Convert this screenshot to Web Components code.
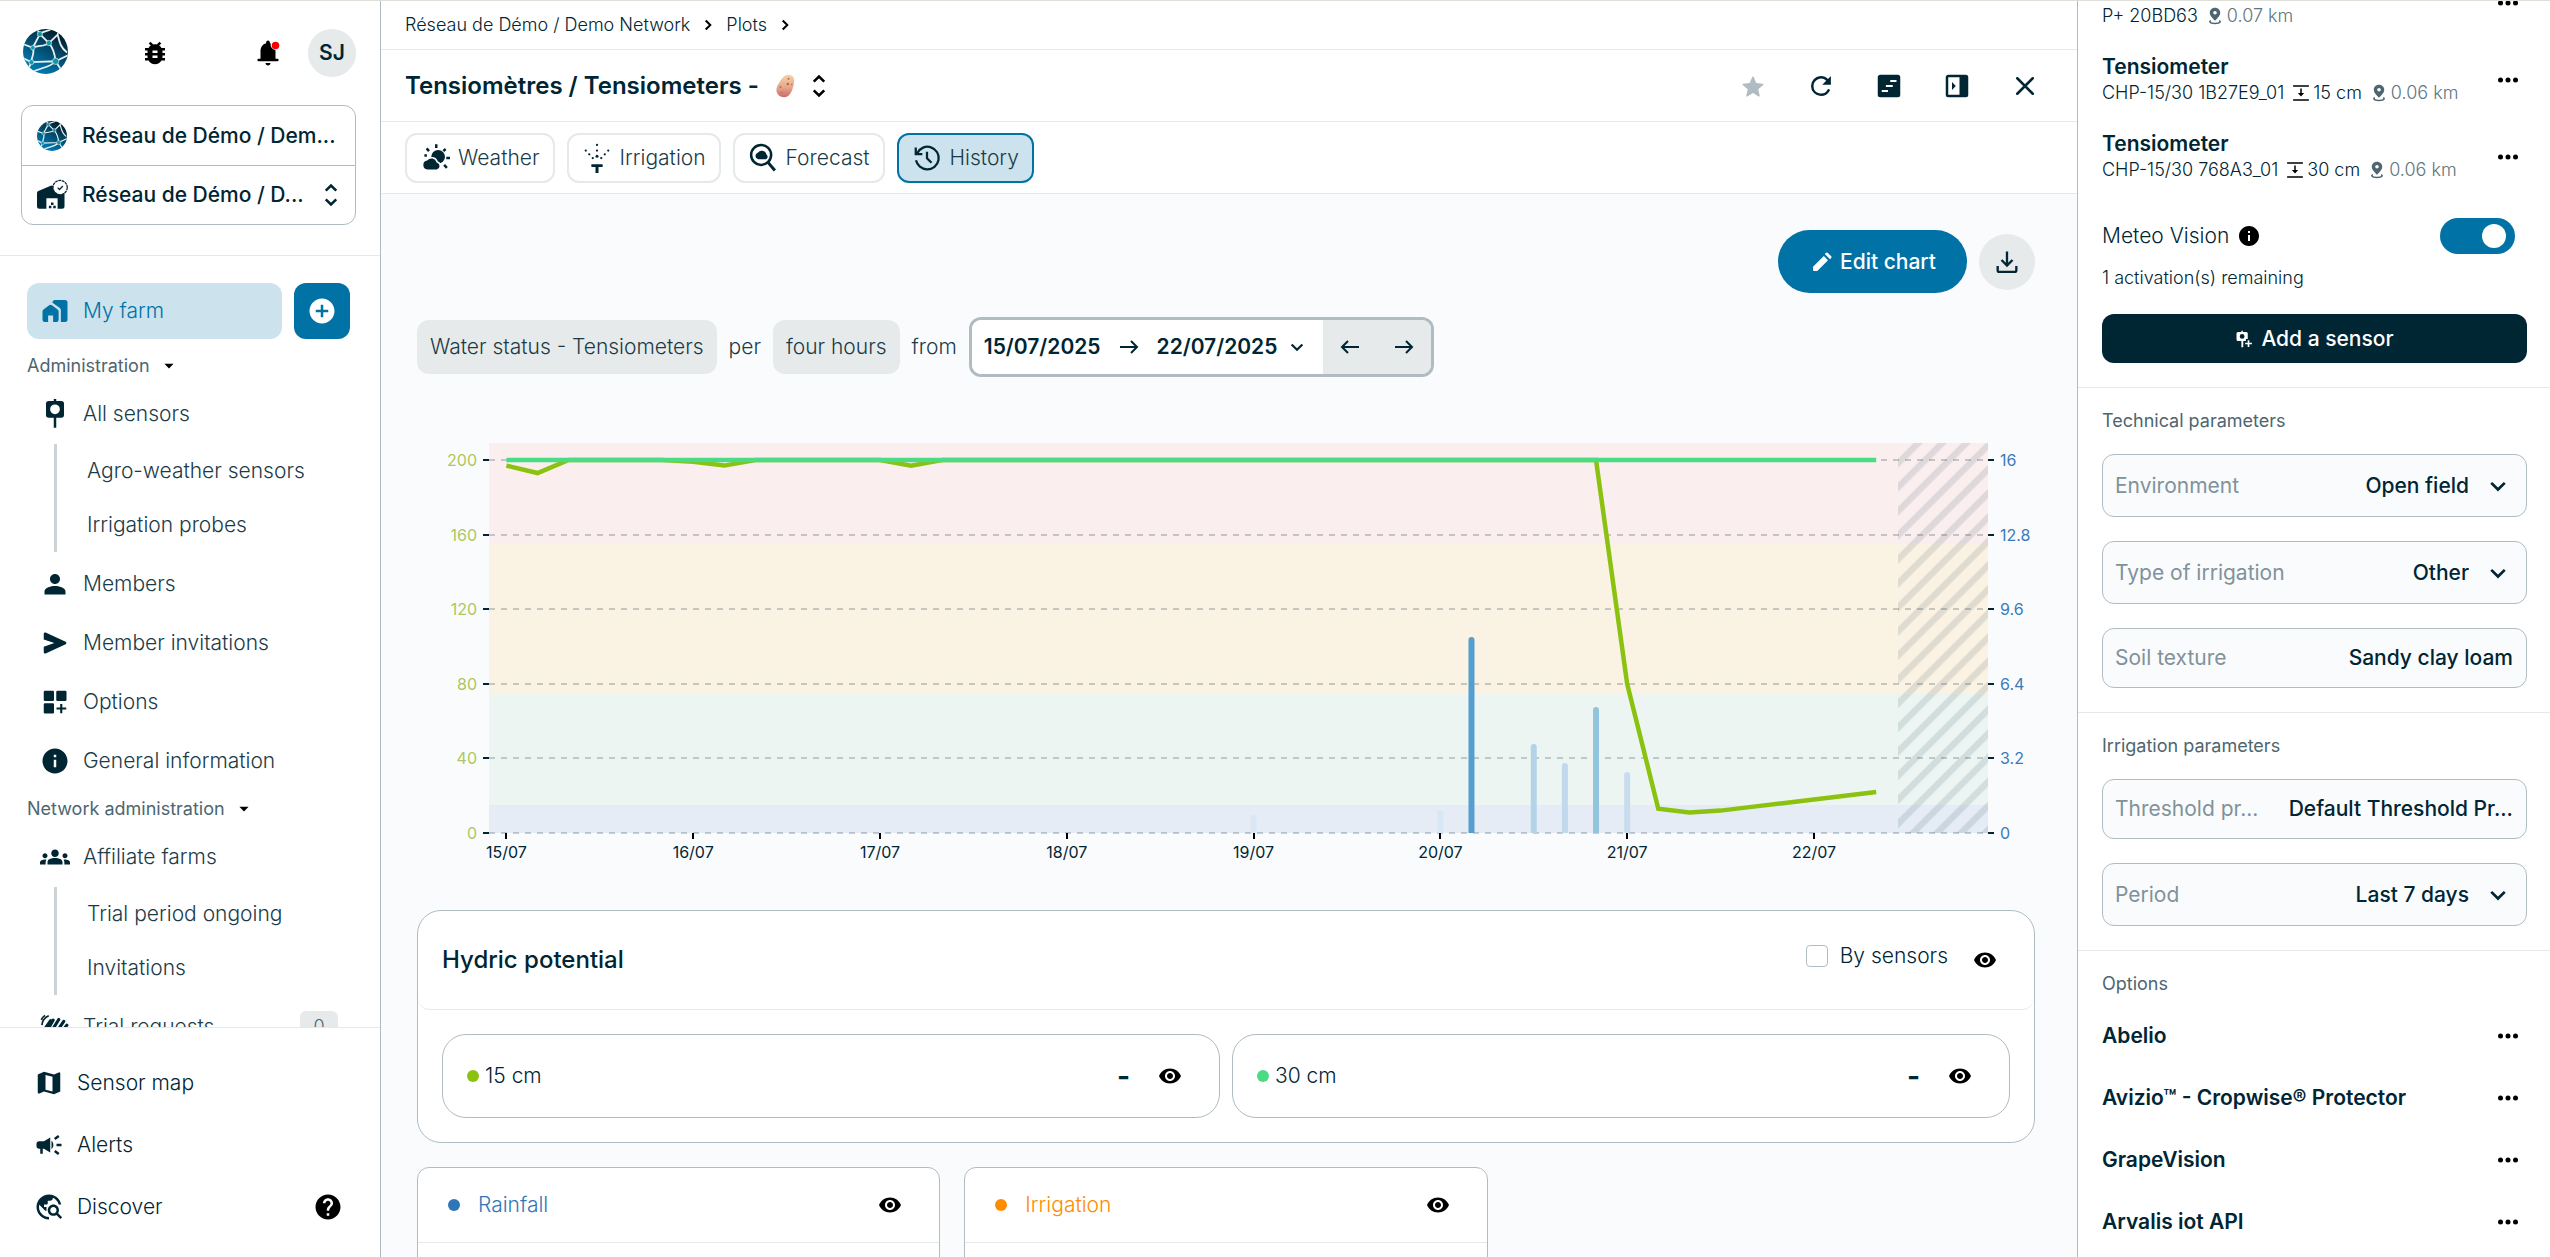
<!DOCTYPE html>
<html lang="en">
<head>
<meta charset="utf-8">
<title>Tensiomètres / Tensiometers - History</title>
<style>
  :root {
    --ink: #002533;
    --text: #1a3b47;
    --muted: #4d6670;
    --faint: #80929a;
    --line: #e6e9e9;
    --edge: #b0bcc2;
    --blue: #0072a6;
    --sky: #cce3ed;
    --grey: #e6eaea;
    --ground: #fafbfd;
  }
  body { margin: 0; font-family: Inter, "Liberation Sans", sans-serif; font-size: 21px; line-height: 28px; font-weight: 300; color: var(--ink); background: #fff; }
</style>
</head>
<body>
<farm-app></farm-app>

<script>
const ICONS = {
  bug: '<path d="M20 8h-2.81c-.45-.78-1.07-1.45-1.82-1.96L17 4.41 15.59 3l-2.17 2.17C12.96 5.06 12.49 5 12 5c-.49 0-.96.06-1.41.17L8.41 3 7 4.41l1.62 1.63C7.88 6.55 7.26 7.22 6.81 8H4v2h2.09c-.05.33-.09.66-.09 1v1H4v2h2v1c0 .34.04.67.09 1H4v2h2.81c1.04 1.79 2.97 3 5.19 3s4.15-1.21 5.19-3H20v-2h-2.09c.05-.33.09-.66.09-1v-1h2v-2h-2v-1c0-.34-.04-.67-.09-1H20V8zm-6 8h-4v-2h4v2zm0-4h-4v-2h4v2z"/>',
  bell: '<path d="M12 22c1.1 0 2-.9 2-2h-4c0 1.1.89 2 2 2zM18 15.500v-5c0-.3 0-.6-.1-1a4.300 4.300 0 0 1-3.700-5.200 6 6 0 0 0-.7-.2V3.500c0-.83-.67-1.500-1.500-1.500s-1.500.67-1.500 1.500v.68C7.63 4.900 6 7.420 6 10.500V16.500H4.500a1 1 0 0 0 0 2h15a1 1 0 0 0 0-2H18z"/><circle cx="18" cy="6" r="3" fill="red"/>',
  updown: '<path d="M7.500 8.300 12 3.900l4.500 4.400M7.500 15.700 12 20.100l4.500-4.400" fill="none" stroke="currentColor" stroke-width="2.200"/>',
  work: '<path d="M2 12.300c0-.7.300-1.200.800-1.600l4.500-3.300a1.900 1.900 0 0 1 2.300 0l4.500 3.300c.5.400.8.900.8 1.600V19a1.800 1.800 0 0 1-1.800 1.800H10.500v-5.300h-4v5.300H3.800A1.800 1.800 0 0 1 2 19z"/><path d="M10 5.200A2 2 0 0 1 12 3.200h8a2 2 0 0 1 2 2v13.600a2 2 0 0 1-2 2h-3.300V11.600c0-.9-.4-1.700-1.100-2.200L10 5.400z"/>',
  addcircle: '<path d="M12 2C6.480 2 2 6.480 2 12s4.480 10 10 10 10-4.480 10-10S17.520 2 12 2zm5 11h-4v4h-2v-4H7v-2h4V7h2v4h4v2z"/>',
  caret: '<path d="M7 9.500h10L12 14.800z"/>',
  probe: '<path fill-rule="evenodd" d="M11 0h2v1.500h4a2.200 2.200 0 0 1 2.200 2.200v9A2.200 2.200 0 0 1 17 14.900h-4v8h-2v-8H7a2.200 2.200 0 0 1-2.200-2.200v-9A2.200 2.200 0 0 1 7 1.500h4zM12 4.300a3.900 3.900 0 1 0 0 7.800 3.900 3.900 0 0 0 0-7.800z"/>',
  person: '<path d="M12 12c2.210 0 4-1.790 4-4s-1.790-4-4-4-4 1.790-4 4 1.790 4 4 4zm0 1.600c-3 0-8.400 1.200-8.400 4.400v2.400h16.800V18c0-3.200-5.400-4.400-8.400-4.400z"/>',
  send: '<path d="M3 4.600c0-.8.8-1.300 1.500-1l16 7.300c.8.400.8 1.700 0 2l-16 7.400c-.7.300-1.500-.2-1.500-1V15l8.500-3L3 9.200z"/>',
  widgets: '<rect x="3" y="3" width="8.200" height="8.200" rx="1"/><rect x="13" y="3" width="8.200" height="8.200" rx="1"/><rect x="3" y="13" width="8.200" height="8.200" rx="1"/><path d="M17 13.500v7.500M13.200 17.200h7.800" fill="none" stroke="currentColor" stroke-width="1.700"/>',
  info: '<path d="M12 2C6.480 2 2 6.480 2 12s4.480 10 10 10 10-4.480 10-10S17.520 2 12 2zm1 15h-2v-6h2v6zm0-8h-2V7h2v2z"/>',
  groups: '<path d="M12 12.750c1.630 0 3.070.39 4.240.9 1.080.48 1.760 1.560 1.760 2.730V18H6v-1.610c0-1.180.68-2.260 1.760-2.730 1.170-.52 2.610-.91 4.240-.91zM4 13c1.100 0 2-.9 2-2s-.9-2-2-2-2 .9-2 2 .9 2 2 2zm1.130 1.100c-.37-.06-.74-.1-1.130-.1-.99 0-1.930.21-2.780.58C.48 14.900 0 15.620 0 16.430V18h4.500v-1.610c0-.83.23-1.610.63-2.290zM20 13c1.100 0 2-.9 2-2s-.9-2-2-2-2 .9-2 2 .9 2 2 2zm4 3.430c0-.81-.48-1.530-1.220-1.850-.85-.37-1.790-.58-2.780-.58-.39 0-.76.04-1.130.1.4.68.63 1.460.63 2.290V18H24v-1.570zM12 6c1.660 0 3 1.340 3 3s-1.340 3-3 3-3-1.340-3-3 1.340-3 3-3z"/>',
  hands: '<path d="M7 20 2.500 15.500 8.500 7M7 19l8-13M10.500 20l8.500-12.500M14 20.500l7.500-10M4.500 17 10.500 6.500" fill="none" stroke="currentColor" stroke-width="2.500" stroke-linecap="round"/><path d="M1.500 10.500A9 9 0 0 1 7 3M1 6.300A9 9 0 0 1 4 2.700" fill="none" stroke="currentColor" stroke-width="1.300"/>',
  map: '<path fill-rule="evenodd" d="M3 5.200 8 3l8 2.200 3.800-1.700A1 1 0 0 1 21 4.400V18.800L16 21l-8-2.300-3.700 1.700A1 1 0 0 1 3 19.500zM9.200 5.500v11.800l5.600 1.500V7z"/>',
  alerts: '<path d="M18 11v2h4v-2h-4zm-2 6.610c.96.71 2.210 1.650 3.200 2.390.4-.53.8-1.070 1.200-1.600-.99-.74-2.240-1.680-3.200-2.400-.4.540-.8 1.080-1.200 1.610zM20.400 5.600c-.4-.53-.8-1.070-1.200-1.600-.99.740-2.240 1.680-3.200 2.400.4.530.8 1.070 1.200 1.600.96-.72 2.210-1.650 3.200-2.400zM4 9c-1.100 0-2 .9-2 2v2c0 1.100.9 2 2 2h1v4h2v-4h1l5 3V6L8 9H4zm11.500 3c0-1.330-.58-2.530-1.500-3.350v6.690c.92-.81 1.500-2.010 1.500-3.340z"/>',
  explore: '<path d="M19.300 16.900c.4-.7.7-1.500.7-2.400 0-2.500-2-4.500-4.500-4.500S11 12 11 14.500s2 4.500 4.500 4.500c.9 0 1.700-.3 2.400-.7l3.200 3.200 1.400-1.400-3.200-3.200zm-3.800.1c-1.400 0-2.500-1.100-2.500-2.500s1.100-2.500 2.500-2.500 2.500 1.100 2.500 2.500-1.100 2.500-2.500 2.500zM12 20v2C6.480 22 2 17.520 2 12S6.480 2 12 2c4.840 0 8.870 3.440 9.800 8h-2.070c-.64-2.460-2.400-4.470-4.730-5.410V5c0 1.100-.9 2-2 2h-2v2c0 .55-.45 1-1 1H8v2h2v3H9l-4.790-4.790C4.080 10.790 4 11.380 4 12c0 4.410 3.590 8 8 8z"/>',
  help: '<path d="M12 2C6.480 2 2 6.480 2 12s4.480 10 10 10 10-4.480 10-10S17.520 2 12 2zm1 17h-2v-2h2v2zm2.070-7.750l-.9.920C13.450 12.900 13 13.500 13 15h-2v-.5c0-1.100.45-2.100 1.170-2.830l1.240-1.260c.37-.36.59-.86.59-1.410 0-1.100-.9-2-2-2s-2 .9-2 2H8c0-2.210 1.790-4 4-4s4 1.790 4 4c0 .88-.36 1.680-.93 2.250z"/>',
  right: '<path d="m9.500 7 5 5-5 5" fill="none" stroke="currentColor" stroke-width="2.200"/>',
  down: '<path d="m6.600 9.500 5.400 5.300 5.400-5.300" fill="none" stroke="currentColor" stroke-width="2.200"/>',
  star: '<path d="m12 17.600-4.500 2.700c-.5.300-1-.1-.9-.6l1.200-5.100-4-3.500c-.4-.4-.2-1 .3-1l5.200-.5 2.100-4.900c.2-.5.900-.5 1.100 0l2.100 4.900 5.300.5c.5 0 .7.600.3 1l-4 3.500 1.200 5.100c.1.500-.4.900-.9.600z"/>',
  refresh: '<path d="M12 20a7.900 7.900 0 0 1-8-8 7.900 7.900 0 0 1 8-8c2.200 0 4.200.9 5.600 2.300L19.900 4v7H13l3.200-3.200A6 6 0 0 0 6 12a6 6 0 0 0 11.200 3c.3-.5.800-.8 1.300-.5.600.200.8.800.5 1.300A8 8 0 0 1 12 20z"/>',
  notes: '<path fill-rule="evenodd" d="M5 3h14a2 2 0 0 1 2 2v14a2 2 0 0 1-2 2H5a2 2 0 0 1-2-2V5c0-1.100.9-2 2-2zm8 4.200v1.600h5V7.200zM9.500 11.200v1.600h5.500v-1.600zM6.200 15.200v1.600h5v-1.600z"/>',
  panel: '<path fill-rule="evenodd" d="M5 3h14a2 2 0 0 1 2 2v14a2 2 0 0 1-2 2H5a2 2 0 0 1-2-2V5c0-1.100.9-2 2-2zm0 2v14h9V5zm3 3.800L11 12l-3 3.200z"/>',
  close: '<path d="M5.800 5.800l12.400 12.400M18.200 5.800 5.800 18.200" fill="none" stroke="currentColor" stroke-width="2" stroke-linecap="round"/>',
  weather: '<circle cx="14.500" cy="11" r="5.500"/><path d="M13 1v3M5.300 4.300l1.900 2.200M20.500 4.800 18.700 6.500M21 12h3M19.300 17.500l2.200 2.400M3.500 10h2" fill="none" stroke="currentColor" stroke-width="2"/><path d="M5.800 21.800a4.200 4.200 0 0 1-.3-8.300 4.800 4.800 0 0 1 8.300 1.700 3.400 3.400 0 0 1-.3 6.600z" stroke="#fff" stroke-width="1.200"/>',
  sprinkler: '<circle cx="12" cy="1.500" r=".9"/><circle cx="12" cy="6" r=".9"/><circle cx="12" cy="10.500" r="1.200"/><circle cx="3" cy="6" r=".9"/><circle cx="5.800" cy="9" r=".9"/><circle cx="8.600" cy="12" r=".9"/><circle cx="21" cy="6" r=".9"/><circle cx="18.200" cy="9" r=".9"/><circle cx="15.400" cy="12" r=".9"/><path d="M7.500 17h9v2.200h-3.300V24h-2.400v-4.800H7.500z"/>',
  forecast: '<circle cx="10.500" cy="9.500" r="8" fill="none" stroke="currentColor" stroke-width="2"/><path d="M16 15.500 21.500 22" fill="none" stroke="currentColor" stroke-width="2.400"/><path d="M8.200 13a2.700 2.700 0 0 1-.4-5.200A4 4 0 0 1 14.800 9v.4a2 2 0 0 1-.6 3.600z"/>',
  history: '<path d="M12 21c-4.300 0-7.900-3.100-8.800-7.200M4.300 8A9 9 0 1 1 12 21M3 3.500v5.300h5.300" fill="none" stroke="currentColor" stroke-width="1.800"/><path d="M12 7v5.200l3.600 3.600" fill="none" stroke="currentColor" stroke-width="1.800"/>',
  edit: '<path fill-rule="evenodd" d="M3 17.200V20a1 1 0 0 0 1 1h2.800a1 1 0 0 0 .7-.3L18 10.200 13.800 6 3.300 16.500a1 1 0 0 0-.3.700zM21 6.100 17.900 3a1.500 1.500 0 0 0-2.100 0l-1 1 5.200 5.200 1-1a1.500 1.500 0 0 0 0-2.100z"/>',
  download: '<path d="M12 3v11M7.300 10.300 12 15l4.700-4.700M4 15.500V19a1.500 1.500 0 0 0 1.500 1.500h13A1.500 1.500 0 0 0 20 19v-3.500" fill="none" stroke="currentColor" stroke-width="2"/>',
  arrowr: '<path d="M3 12h17M14 6l6 6-6 6" fill="none" stroke="currentColor" stroke-width="2"/>',
  arrowl: '<path d="M21 12H4M10 6l-6 6 6 6" fill="none" stroke="currentColor" stroke-width="2"/>',
  eye: '<path d="M12 4.500C7 4.500 2.730 7.610 1 12c1.730 4.390 6 7.500 11 7.500s9.270-3.110 11-7.500c-1.730-4.390-6-7.500-11-7.500zM12 17c-2.760 0-5-2.240-5-5s2.240-5 5-5 5 2.240 5 5-2.240 5-5 5zm0-8c-1.660 0-3 1.340-3 3s1.340 3 3 3 3-1.340 3-3-1.340-3-3-3z"/>',
  more: '<circle cx="6" cy="12" r="2"/><circle cx="12" cy="12" r="2"/><circle cx="18" cy="12" r="2"/>',
  pin: '<path fill-rule="evenodd" d="M12 1c4 0 7 2.900 7 6.800 0 3.600-2.700 6.500-7 10.400-4.300-3.900-7-6.800-7-10.400C5 3.900 8 1 12 1zm0 4.200a2.400 2.400 0 1 0 0 4.800 2.400 2.400 0 0 0 0-4.800z"/><path d="M6.500 18.200c-1.300.5-1.800 1.200-1.200 2 1.600 2.200 11.800 2.200 13.400 0 .6-.8.100-1.500-1.200-2" fill="none" stroke="currentColor" stroke-width="2"/>',
  depth: '<path d="M1.500 2.800h21M1.500 21.200h21" fill="none" stroke="currentColor" stroke-width="2"/><path d="M11 6h2v6h3.200L12 16.500 7.800 12H11z"/>',
  addsensor: '<path fill-rule="evenodd" d="M8.500 1h2v1.500H15A2 2 0 0 1 17 4.500V12h-2.500v2.500H11V23H8.500v-8.500H4a2 2 0 0 1-2-2v-8a2 2 0 0 1 2-2h4.500zm1 4.300a3.200 3.200 0 1 0 0 6.400 3.200 3.200 0 0 0 0-6.400z"/><path d="M18 13.500v9M13.500 18h9" fill="none" stroke="currentColor" stroke-width="2.200"/>',
  farm: '<path d="M0 10.500c0-.8.400-1.500 1.100-1.800L11 4.500a2 2 0 0 1 1.600 0L22 9v12a2 2 0 0 1-2 2h-3.500v-8.500h-9V23H2a2 2 0 0 1-2-2z"/><path d="M9.500 20.500h2v2h-2zM13 20.500h2v2h-2zM11.200 18h2v2h-2z"/><circle cx="18.500" cy="6" r="5.700" fill="#fff" stroke="currentColor" stroke-width="1" stroke-dasharray="2.300 .5"/><path d="m16.500 6.100 1.500 1.500 2.700-2.800" fill="none" stroke="currentColor" stroke-width="1"/>',
  potato: '<defs><linearGradient id="p" x1="0" y1="0" x2="0" y2="1"><stop offset="0" stop-color="#f6d3a8"/><stop offset=".55" stop-color="#e5a98a"/><stop offset="1" stop-color="#cb6a6c"/></linearGradient></defs><path d="M15 .8c4.500-.3 7 3.300 6 8.400-.9 4.700-2.200 9-5 12-2.700 2.900-8.500 2.500-11-.8-2.700-3.600-1.500-8.200 1-11.500C8.500 5.500 10.500 1.100 15 .8z" fill="url(#p)"/><g fill="#b4694e"><circle cx="15.500" cy="4.800" r="1"/><circle cx="14.800" cy="10" r="1.300"/><circle cx="18.800" cy="10.500" r=".8"/><circle cx="7.500" cy="13" r=".9"/><circle cx="9" cy="18.500" r=".8"/></g>',
  globe: '<defs><linearGradient id="g" x1=".75" y1=".1" x2=".3" y2=".85"><stop offset="0" stop-color="#01202c"/><stop offset=".35" stop-color="#04405c"/><stop offset="1" stop-color="#0076ab"/></linearGradient><clipPath id="c"><circle cx="12" cy="12" r="12"/></clipPath></defs><circle cx="12" cy="12" r="12" fill="url(#g)"/><g clip-path="url(#c)"><path d="M9 2.700 7.500 0M9 2.700C11 .8 13 1.500 15 0M9 2.700l4.800 4.800M9 2.700 5.200 10M13.800 7.500 18.500 3l.8-3M13.800 7.500C11.500 9.500 8 8.500 5.200 10M5.200 10 0 8M5.200 10c1.300 3-.9 5-.7 7.700M4.500 17.700 0 15.500M4.500 17.700 3 21M4.500 17.700l12.900-.5M13.800 7.500c2.700 3 3.200 6 3.600 9.700M17.400 17.200 24 14M17.400 17.200 20.500 22M17.400 17.200C14 21 9 20.500 5 23M18.500 3c1 4 1.500 7 5 9.500" fill="none" stroke="#e6f1f6" stroke-width=".95"/></g><g fill="#0f98a5" stroke="#d4ecef" stroke-width=".35"><circle cx="9" cy="2.700" r="1.400"/><circle cx="13.800" cy="7.500" r="1.400"/><circle cx="5.200" cy="10" r="1.200"/><circle cx="4.500" cy="17.700" r="1.300"/><circle cx="17.400" cy="17.200" r="1.700"/></g>'
};

const RESET = `
  *, *::before { box-sizing: border-box; }
  a { color: inherit; text-decoration: none; }
  button { font: inherit; color: inherit; border: 0; padding: 0; margin: 0; background: none; display: flex; align-items: center; justify-content: center; }
  h1, h2, h3, p { margin: 0; font: inherit; }
  ui-icon { flex: none; }
`;

/* Registers a custom element whose shadow root is filled from a style and a markup function. */
function component(name, css, markup, after) {
  customElements.define(name, class extends HTMLElement {
    constructor() { super(); this.attachShadow({ mode: 'open' }); }
    connectedCallback() {
      const t = document.createElement('template');
      t.innerHTML = `<style>${RESET}${css}</style>${markup(this)}`;
      this.shadowRoot.replaceChildren(t.content.cloneNode(true));
      if (after) after(this);
    }
  });
}
const at = (el, name) => el.getAttribute(name) || '';

component('ui-icon',
  `:host { display: block; width: var(--size, 30px); height: var(--size, 30px); } svg { display: block; width: 100%; height: 100%; overflow: visible; }`,
  el => `<svg viewBox="0 0 24 24" fill="currentColor" aria-hidden="true">${ICONS[at(el, 'name')]}</svg>`);

component('more-button',
  `:host { display: block; color: #000; flex: none; }`,
  () => `<button aria-label="More"><ui-icon name="more"></ui-icon></button>`);

/* ---------- Sidebar ---------- */

component('nav-item', `
  :host { display: block; }
  a { display: flex; align-items: center; height: 59px; padding-left: 40px; gap: 13px; color: var(--text); }
  :host([sub]) a { height: 54px; padding-left: 30px; }
  :host([foot]) a { height: 62px; padding: 0 37px 0 34px; color: var(--ink); }
  a ui-icon { color: var(--ink); }
  .label { flex: 1; }
`, el => `<a href="#">${at(el, 'icon') ? `<ui-icon name="${at(el, 'icon')}"></ui-icon>` : ''}<span class="label"><slot></slot></span><slot name="end"></slot></a>`);

component('nav-group', `
  :host { display: block; }
  button { height: 37px; padding-left: 27px; gap: 8px; font-size: 18px; font-weight: 400; color: var(--muted); }
  ui-icon { --size: 22px; color: #000; }
`, el => `<button aria-expanded="true">${at(el, 'label')}<ui-icon name="caret"></ui-icon></button><slot></slot>`);

component('nav-sub', `
  :host { display: block; margin: 1px 0 2px 54px; border-left: 3px solid #ccd3d6; }
`, () => `<slot></slot>`);

component('side-bar', `
  :host { display: flex; flex-direction: column; width: 381px; border-right: 1px solid var(--edge); background: #fff; }
  header { padding: 28px 24px 30px 21px; border-bottom: 1px solid var(--line); }
  .top { display: flex; align-items: center; margin-bottom: 28px; color: #000; }
  .logo { --size: 45px; margin: 0 72px 3px 2px; }
  .bell { margin-left: auto; }
  .avatar { width: 48px; height: 48px; margin-left: 25px; border-radius: 50%; background: var(--grey); color: var(--ink); font-weight: 600; }
  .switch { border: 1px solid var(--edge); border-radius: 12px; }
  .switch button { width: 100%; height: 59px; padding: 0 16px 0 15px; gap: 15px; font-weight: 500; text-align: left; }
  .switch button + button { border-top: 1px solid var(--edge); }
  .switch span { flex: 1; min-width: 0; white-space: nowrap; }
  .switch ui-icon:last-child { --size: 28px; margin-left: -15px; margin-right: -6px; }
  nav { flex: 1; min-height: 0; overflow: hidden; padding-top: 27px; }
  .farm { display: flex; gap: 12px; padding: 0 30px 8px 27px; }
  .farm a { flex: 1; height: 56px; display: flex; align-items: center; gap: 13px; padding-left: 13px; border-radius: 12px; background: var(--sky); color: var(--blue); }
  .farm button { width: 56px; height: 56px; border-radius: 12px; background: var(--blue); color: #fff; }
  .count { width: 38px; height: 32px; margin-right: 42px; border-radius: 6px; background: var(--grey); color: var(--muted); font-size: 18px; line-height: 32px; text-align: center; }
  footer { border-top: 1px solid var(--line); padding: 24px 0 19px; }
  .help { color: #000; }
`, () => `
  <header>
    <div class="top">
      <ui-icon class="logo" name="globe"></ui-icon>
      <button aria-label="Report a bug"><ui-icon name="bug"></ui-icon></button>
      <button class="bell" aria-label="Notifications"><ui-icon name="bell"></ui-icon></button>
      <button class="avatar">SJ</button>
    </div>
    <div class="switch">
      <button><ui-icon name="globe"></ui-icon><span>Réseau de Démo / Dem...</span></button>
      <button><ui-icon name="farm"></ui-icon><span>Réseau de Démo / D...</span><ui-icon name="updown"></ui-icon></button>
    </div>
  </header>
  <nav>
    <div class="farm"><a href="#"><ui-icon name="work"></ui-icon>My farm</a><button aria-label="Add"><ui-icon name="addcircle"></ui-icon></button></div>
    <nav-group label="Administration">
      <nav-item icon="probe">All sensors</nav-item>
      <nav-sub><nav-item sub>Agro-weather sensors</nav-item><nav-item sub>Irrigation probes</nav-item></nav-sub>
      <nav-item icon="person">Members</nav-item>
      <nav-item icon="send">Member invitations</nav-item>
      <nav-item icon="widgets">Options</nav-item>
      <nav-item icon="info">General information</nav-item>
    </nav-group>
    <nav-group label="Network administration">
      <nav-item icon="groups">Affiliate farms</nav-item>
      <nav-sub><nav-item sub>Trial period ongoing</nav-item><nav-item sub>Invitations</nav-item></nav-sub>
      <nav-item icon="hands">Trial requests<span slot="end" class="count">0</span></nav-item>
    </nav-group>
  </nav>
  <footer>
    <nav-item foot icon="map">Sensor map</nav-item>
    <nav-item foot icon="alerts">Alerts</nav-item>
    <nav-item foot icon="explore">Discover<ui-icon slot="end" class="help" name="help"></ui-icon></nav-item>
  </footer>
`);

/* ---------- Plot page ---------- */

component('tab-link', `
  :host { display: block; }
  button { height: 50px; padding: 0 13px; gap: 8px; border: 2px solid var(--line); border-radius: 12px; background: #fff; color: var(--text); }
  ui-icon { color: var(--ink); }
  :host([active]) button { border-color: var(--blue); background: var(--sky); }
`, el => `<button><ui-icon name="${at(el, 'icon')}"></ui-icon><slot></slot></button>`);

component('plot-header', `
  :host { display: block; background: #fff; }
  .crumbs, .title, .tabs { display: flex; align-items: center; border-bottom: 1px solid var(--line); padding: 0 37px 0 24px; }
  .crumbs { height: 49px; gap: 7px; font-size: 18px; }
  .crumbs ui-icon { --size: 22px; color: #000; }
  .title { height: 72px; }
  h1 { font-size: 24px; font-weight: 600; }
  .potato { --size: 24px; margin: 0 8px 0 14px; }
  .pick { color: #000; --size: 28px; margin-right: auto; }
  .tools { display: flex; gap: 38px; --size: 30px; }
  .tools button:first-child { color: var(--edge); }
  .tabs { height: 72px; gap: 12px; }
`, () => `
  <div class="crumbs"><a href="#">Réseau de Démo / Demo Network</a><ui-icon name="right"></ui-icon><a href="#">Plots</a><ui-icon name="right"></ui-icon></div>
  <div class="title">
    <h1>Tensiomètres / Tensiometers -</h1><ui-icon class="potato" name="potato"></ui-icon>
    <button class="pick" aria-label="Switch plot"><ui-icon name="updown"></ui-icon></button>
    <div class="tools">
      <button aria-label="Favourite"><ui-icon name="star"></ui-icon></button>
      <button aria-label="Refresh"><ui-icon name="refresh"></ui-icon></button>
      <button aria-label="Notes"><ui-icon name="notes"></ui-icon></button>
      <button aria-label="Side panel"><ui-icon name="panel"></ui-icon></button>
      <button aria-label="Close"><ui-icon name="close"></ui-icon></button>
    </div>
  </div>
  <div class="tabs">
    <tab-link icon="weather">Weather</tab-link><tab-link icon="sprinkler">Irrigation</tab-link>
    <tab-link icon="forecast">Forecast</tab-link><tab-link icon="history" active>History</tab-link>
  </div>
`);

component('chart-toolbar', `
  :host { display: block; }
  .actions { display: flex; justify-content: flex-end; align-items: center; gap: 12px; margin-bottom: 24px; }
  .edit { height: 63px; padding: 0 31px 0 32px; gap: 6px; border-radius: 32px; background: var(--blue); color: #fff; font-weight: 500; --size: 24px; }
  .save { width: 56px; height: 56px; border-radius: 50%; background: var(--grey); --size: 28px; }
  .filters { display: flex; align-items: center; gap: 12px; color: var(--text); }
  .chip { height: 54px; padding: 0 13px; border-radius: 12px; background: var(--grey); }
  .range { display: flex; height: 60px; border: 3px solid var(--edge); border-radius: 12px; overflow: hidden; color: var(--ink); font-weight: 600; --size: 24px; }
  .dates { padding: 0 14px 0 12px; background: #fff; gap: 16px; }
  .dates ui-icon:last-child { margin-left: -8px; }
  .step { width: 54px; background: var(--grey); }
`, () => `
  <div class="actions">
    <button class="edit"><ui-icon name="edit"></ui-icon>Edit chart</button>
    <button class="save" aria-label="Download"><ui-icon name="download"></ui-icon></button>
  </div>
  <div class="filters">
    <button class="chip">Water status - Tensiometers</button><span>per</span><button class="chip">four hours</button><span>from</span>
    <div class="range">
      <button class="dates"><span>15/07/2025</span><ui-icon name="arrowr"></ui-icon><span>22/07/2025</span><ui-icon name="down"></ui-icon></button>
      <button class="step" aria-label="Previous period"><ui-icon name="arrowl"></ui-icon></button>
      <button class="step" aria-label="Next period"><ui-icon name="arrowr"></ui-icon></button>
    </div>
  </div>
`);

/* Tension lines (cb, left axis) over rainfall bars (mm, right axis), one sample per four hours. */
component('tension-chart', `
  :host { display: block; height: 485px; }
  svg { display: block; width: 100%; height: 100%; font-size: 16px; font-weight: 400; }
`, () => `<svg role="img" aria-label="Tensiometers and rainfall, 15/07 to 22/07"></svg>`, el => {
  const svg = el.shadowRoot.querySelector('svg');
  const draw = () => {
    const W = el.clientWidth, L = 72, R = W - 47, top = 42, zero = 432, unit = 1.865;
    const step = (R - L) / 48.15, x0 = L + 17.4;
    const x = i => x0 + i * step, y = v => zero - v * unit;
    const band = (lo, hi, c) => `<rect x="${L}" y="${hi}" width="${R - L}" height="${lo - hi}" fill="${c}"/>`;
    let s = `<defs><pattern id="h" width="17" height="17" patternUnits="userSpaceOnUse" patternTransform="rotate(45)"><rect width="6.500" height="17" fill="#002533" opacity=".11"/></pattern></defs>`;
    s += band(zero, y(15), '#e5ecf5') + band(y(15), y(75), '#ecf5f1') + band(y(75), y(155), '#faf2e3') + band(y(155), top, '#faeeef');
    for (let k = 0; k <= 5; k++) {
      const g = Math.round(y(k * 40));
      s += `<line x1="${L}" x2="${R}" y1="${g}" y2="${g}" stroke="#002533" stroke-opacity=".28" stroke-width="1.500" stroke-dasharray="6"/>`
        + `<path d="M${L - 6} ${g}h6M${R} ${g}h6" stroke="#002533" stroke-width="2"/>`
        + `<text x="${L - 12}" y="${g + 6}" text-anchor="end" fill="#acc75f">${k * 40}</text>`
        + `<text x="${R + 12}" y="${g + 6}" fill="#3a7ab8">${+(k * 3.2).toFixed(1)}</text>`;
    }
    [[24, 815, '#dbe6f4'], [30, 810, '#d8e7f6'], [31, 637, '#549fcf'], [33, 744, '#b4d3e8'], [34, 763, '#c0d9ec'], [35, 707, '#93c4de'], [36, 772, '#c9dced']]
      .forEach(([i, t, c]) => { const yt = t - 401; s += `<path d="M${x(i) - 3} ${zero}V${yt + 3}a3 3 0 0 1 6 0V${zero}z" fill="${c}"/>`; });
    s += `<rect x="${R - 90}" y="${top}" width="90" height="${zero - top}" fill="url(#h)"/>`;
    const v = Array(45).fill(200);
    Object.assign(v, { 0: 197, 1: 193, 6: 199, 7: 197, 13: 197, 36: 80, 37: 13, 38: 11, 39: 12, 40: 14, 41: 16, 42: 18, 43: 20, 44: 22 });
    s += `<polyline points="${v.map((n, i) => x(i) + ',' + y(n)).join(' ')}" fill="none" stroke="#8bc20f" stroke-width="4.500"/>`
      + `<line x1="${x(0)}" x2="${x(44)}" y1="${y(200)}" y2="${y(200)}" stroke="#4bdb84" stroke-width="4.500"/>`;
    for (let d = 0; d < 8; d++)
      s += `<path d="M${Math.round(x(d * 6))} ${zero}v6" stroke="#000" stroke-width="2"/><text x="${x(d * 6)}" y="${zero + 25}" text-anchor="middle" fill="#002533">${15 + d}/07</text>`;
    svg.innerHTML = s;
  };
  draw();
  new ResizeObserver(draw).observe(el);
});

component('depth-card', `
  :host { display: flex; align-items: center; flex: 1; height: 84px; padding: 0 37px 0 24px; border: 1px solid var(--edge); border-radius: 24px; background: #fff; }
  .dot { width: 12px; height: 12px; margin-right: 6px; border-radius: 50%; background: var(--c); }
  .name { flex: 1; }
  .value { font-size: 28px; font-weight: 700; margin-right: 28px; }
  button { color: #000; --size: 24px; }
`, () => `<span class="dot"></span><span class="name"><slot></slot></span><span class="value">-</span><button aria-label="Show or hide"><ui-icon name="eye"></ui-icon></button>`);

component('hydric-card', `
  :host { display: block; border: 1px solid var(--edge); border-radius: 24px; background: #fff; }
  header { display: flex; align-items: center; height: 99px; padding: 0 37px 0 24px; border-bottom: 1px solid var(--line); border-radius: 0 0 12px 12px; }
  h2 { flex: 1; font-size: 24px; font-weight: 500; }
  label { display: flex; align-items: center; gap: 12px; margin: 0 25px 8px 0; }
  input { appearance: none; width: 22px; height: 22px; margin: 0; border: 1px solid var(--edge); border-radius: 4px; background: #fff; }
  button { color: #000; --size: 24px; }
  .depths { display: flex; gap: 12px; padding: 24px; }
`, () => `
  <header><h2>Hydric potential</h2><label><input type="checkbox">By sensors</label><button aria-label="Show or hide all"><ui-icon name="eye"></ui-icon></button></header>
  <div class="depths"><depth-card style="--c: #8bc20f">15 cm</depth-card><depth-card style="--c: #4bdb84">30 cm</depth-card></div>
`);

component('measure-card', `
  :host { display: block; height: 200px; border: 1px solid var(--edge); border-radius: 12px; background: #fff; }
  header { display: flex; align-items: center; height: 75px; padding: 0 37px 0 30px; border-bottom: 1px solid var(--line); color: var(--c); }
  .dot { width: 12px; height: 12px; margin-right: 18px; border-radius: 50%; background: var(--c); }
  h3 { flex: 1; }
  button { color: #000; --size: 24px; }
`, () => `<header><span class="dot"></span><h3><slot></slot></h3><button aria-label="Show or hide"><ui-icon name="eye"></ui-icon></button></header>`);

component('plot-page', `
  :host { display: flex; flex-direction: column; flex: 1; min-width: 0; background: var(--ground); }
  .body { flex: 1; min-height: 0; overflow: hidden; padding: 36px 42px 0 36px; display: flex; flex-direction: column; gap: 24px; }
  .body > * { flex: none; }
  .measures { display: grid; grid-template-columns: repeat(3, 1fr); gap: 24px; }
`, () => `
  <plot-header></plot-header>
  <div class="body">
    <chart-toolbar></chart-toolbar>
    <tension-chart></tension-chart>
    <hydric-card></hydric-card>
    <div class="measures"><measure-card style="--c: #2f76b9">Rainfall</measure-card><measure-card style="--c: #ff8c00">Irrigation</measure-card></div>
  </div>
`);

/* ---------- Right panel ---------- */

component('sensor-row', `
  :host { display: flex; align-items: center; height: 77px; padding-right: 4px; }
  .main { flex: 1; }
  h3 { min-height: 26px; font-weight: 600; line-height: 26px; }
  p { display: flex; align-items: center; font-size: 18px; line-height: 26px; }
  .depth { --size: 18px; margin: 0 3px 0 8px; color: #000; }
  .pin { --size: 18px; margin: 0 3px 0 8px; color: var(--muted); }
  .far { display: flex; align-items: center; color: #5f7680; }
`, el => `<div class="main"><h3>${at(el, 'name')}</h3><p>${at(el, 'code')}${at(el, 'depth') ? `<ui-icon class="depth" name="depth"></ui-icon>${at(el, 'depth')}` : ''}<span class="far"><ui-icon class="pin" name="pin"></ui-icon>${at(el, 'far')}</span></p></div><more-button></more-button>`);

component('param-field', `
  :host { display: flex; align-items: center; height: 60px; padding: 0 13px 0 12px; border: 1px solid var(--edge); border-radius: 12px; background: var(--ground); font-weight: 400; }
  :host([options]) { height: 63px; }
  label { flex: none; color: var(--faint); }
  select, input { flex: 1; min-width: 0; margin: 0; padding: 0; border: 0; appearance: none; background: none; font: inherit; font-weight: 500; color: var(--ink); text-align: right; text-align-last: right; }
  ui-icon { --size: 30px; margin-left: 14px; }
`, el => at(el, 'options')
  ? `<label for="f">${at(el, 'label')}</label><select id="f">${at(el, 'options').split('|').map(o => `<option>${o}</option>`).join('')}</select><ui-icon name="down"></ui-icon>`
  : `<label for="f">${at(el, 'label')}</label><input id="f" type="text" readonly value="${at(el, 'value')}">`);

component('panel-section', `
  :host { display: flex; flex-direction: column; gap: 22px; padding: 22px 23px 24px 24px; border-top: 1px solid var(--line); }
  h2 { font-size: 18px; font-weight: 400; line-height: 22px; color: var(--muted); }
  .rows { display: flex; flex-direction: column; gap: 24px; }
  :host([tight]) .rows { gap: 0; }
  :host([tight]) { gap: 10px; }
`, el => `<h2>${at(el, 'label')}</h2><div class="rows"><slot></slot></div>`);

component('option-row', `
  :host { display: flex; align-items: center; justify-content: space-between; height: 62px; padding-right: 4px; font-weight: 600; }
`, () => `<span><slot></slot></span><more-button></more-button>`);

component('detail-panel', `
  :host { display: flex; flex-direction: column; width: 473px; overflow: hidden; border-left: 1px solid var(--edge); background: #fff; }
  .sensors, panel-section { flex: none; }
  .sensors { margin-top: -37px; padding: 0 23px 24px 24px; }
  .vision { display: flex; align-items: center; height: 50px; margin-top: 16px; padding-right: 12px; }
  .vision label { margin-right: 8px; }
  .vision ui-icon { --size: 24px; color: #000; margin-right: auto; }
  .vision input { appearance: none; width: 75px; height: 36px; margin: 0; padding: 6px 9px; border-radius: 18px; background: var(--blue); display: flex; justify-content: flex-end; }
  .vision input::before { content: ""; width: 24px; height: 24px; border-radius: 50%; background: #fff; }
  .note { font-size: 18px; line-height: 34px; margin-bottom: 19px; }
  .add { width: 100%; height: 49px; border-radius: 12px; background: var(--ink); color: #fff; font-weight: 500; gap: 8px; --size: 18px; }
`, () => `
  <div class="sensors">
    <sensor-row code="P+ 20BD63" far="0.07 km"></sensor-row>
    <sensor-row name="Tensiometer" code="CHP-15/30 1B27E9_01" depth="15 cm" far="0.06 km"></sensor-row>
    <sensor-row name="Tensiometer" code="CHP-15/30 768A3_01" depth="30 cm" far="0.06 km"></sensor-row>
    <div class="vision"><label for="mv">Meteo Vision</label><ui-icon name="info"></ui-icon><input id="mv" type="checkbox" role="switch" checked></div>
    <p class="note">1 activation(s) remaining</p>
    <button class="add"><ui-icon name="addsensor"></ui-icon>Add a sensor</button>
  </div>
  <panel-section label="Technical parameters">
    <param-field label="Environment" options="Open field|Greenhouse"></param-field>
    <param-field label="Type of irrigation" options="Other|Drip|Sprinkler"></param-field>
    <param-field label="Soil texture" value="Sandy clay loam"></param-field>
  </panel-section>
  <panel-section label="Irrigation parameters">
    <param-field label="Threshold pr..." value="Default Threshold Pr..."></param-field>
    <param-field label="Period" options="Last 7 days|Last 30 days"></param-field>
  </panel-section>
  <panel-section tight label="Options">
    <option-row>Abelio</option-row><option-row>Avizio™ - Cropwise® Protector</option-row><option-row>GrapeVision</option-row><option-row>Arvalis iot API</option-row>
  </panel-section>
`);

component('farm-app', `
  :host { display: flex; height: 100vh; box-sizing: border-box; border-top: 1px solid #dfdfd9; overflow: hidden; }
  side-bar, detail-panel { flex: none; }
`, () => `<side-bar></side-bar><plot-page></plot-page><detail-panel></detail-panel>`);
</script>
</body>
</html>
